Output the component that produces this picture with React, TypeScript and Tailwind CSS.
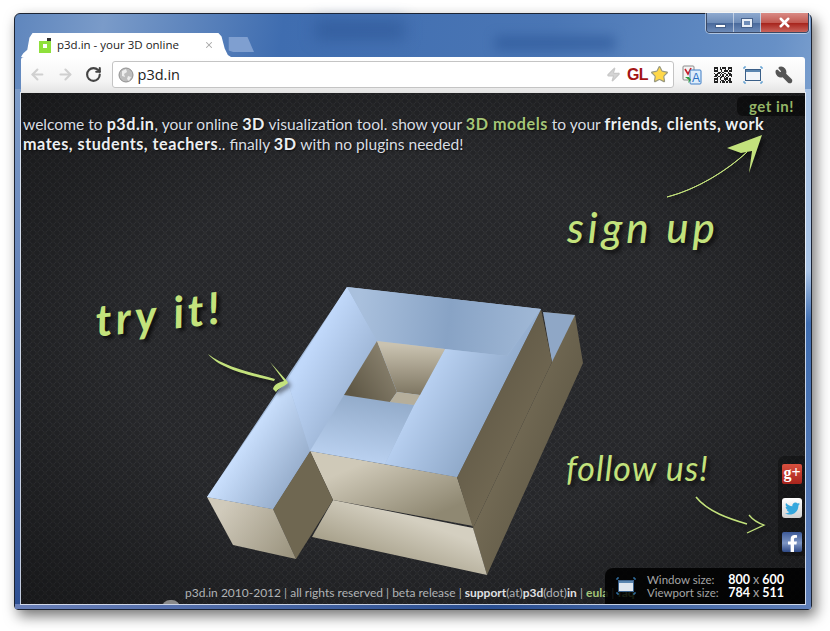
import { ArrowLeft, ArrowRight, RotateCw, Zap, Star, Wrench, X } from 'lucide-react';
import { FaTwitter, FaFacebookF } from 'react-icons/fa';

const qrRows = [
  '1110101110111',
  '1010110010101',
  '1110010111011',
  '0001101000100',
  '1011010110110',
  '0110101001011',
  '1101011010101',
  '0010110101000',
  '1110100111010',
  '1010011010110',
  '1110101101011',
];

function QrIcon() {
  return (
    <svg width="18" height="18" viewBox="0 0 13 13" shapeRendering="crispEdges">
      {qrRows.map((row, y) =>
        row.split('').map((c, x) => (c === '1' ? <rect key={`${x}-${y}`} x={x} y={y + 1} width="1" height="1" fill="#222" /> : null)),
      )}
    </svg>
  );
}

function TranslateIcon() {
  return (
    <svg width="20" height="20" viewBox="0 0 20 20">
      <rect x="1" y="1" width="11" height="14" rx="1" fill="#f4f4f4" stroke="#8a8a8a" />
      <path d="M3 4l3 5 3-6" fill="none" stroke="#c8202a" strokeWidth="1.6" />
      <rect x="8" y="5" width="11" height="14" rx="1" fill="#dcecfb" stroke="#3f7cc4" />
      <text x="10" y="17" fontSize="12" fontFamily="Liberation Sans" fill="#2a6fc4" fontWeight="400">A</text>
      <path d="M3 12l4 3-1 3 3-3-2-3z" fill="#2f9e3f" />
    </svg>
  );
}

function ScreenIcon({ dark = false }: { dark?: boolean }) {
  return (
    <svg width="20" height="18" viewBox="0 0 20 18" fill="none">
      <path d="M1 3V1h2M17 1h2v2M1 15v2h2M17 17h2v-2" stroke="#3d8ac8" strokeWidth="1" />
      <rect x="2.5" y="3.5" width="15" height="11" fill={dark ? '#dfe6ee' : '#f2f5f9'} stroke="#3a5f88" />
      <rect x="3" y="4" width="14" height="2" fill="#5b86b0" />
    </svg>
  );
}

function Model() {
  return (
    <svg className="absolute left-0 top-0 [filter:blur(0.4px)]" width="784" height="511" viewBox="21 93 784 511">
      <defs>
        <linearGradient id="blueA" gradientUnits="userSpaceOnUse" x1="240" y1="450" x2="300" y2="490">
          <stop offset="0" stopColor="#c8defc" />
          <stop offset="1" stopColor="#8fa6c4" />
        </linearGradient>
        <linearGradient id="blueB" gradientUnits="userSpaceOnUse" x1="310" y1="350" x2="390" y2="395">
          <stop offset="0" stopColor="#c0d8fa" />
          <stop offset="1" stopColor="#8ba3c2" />
        </linearGradient>
        <linearGradient id="blueC" gradientUnits="userSpaceOnUse" x1="360" y1="300" x2="540" y2="320">
          <stop offset="0" stopColor="#a9c0dd" />
          <stop offset="0.5" stopColor="#88a3c5" />
          <stop offset="1" stopColor="#a0b8d6" />
        </linearGradient>
        <linearGradient id="blueD" gradientUnits="userSpaceOnUse" x1="410" y1="390" x2="500" y2="440">
          <stop offset="0" stopColor="#bdd5f6" />
          <stop offset="1" stopColor="#86a0c0" />
        </linearGradient>
        <linearGradient id="blueE" gradientUnits="userSpaceOnUse" x1="370" y1="390" x2="360" y2="460">
          <stop offset="0" stopColor="#8ea7c6" />
          <stop offset="1" stopColor="#b9d0ef" />
        </linearGradient>
        <linearGradient id="tanA" gradientUnits="userSpaceOnUse" x1="370" y1="460" x2="400" y2="530">
          <stop offset="0" stopColor="#cfc9b8" />
          <stop offset="1" stopColor="#8f8872" />
        </linearGradient>
        <linearGradient id="tanB" gradientUnits="userSpaceOnUse" x1="400" y1="515" x2="380" y2="570">
          <stop offset="0" stopColor="#d4cfc0" />
          <stop offset="1" stopColor="#a09982" />
        </linearGradient>
        <linearGradient id="tanC" gradientUnits="userSpaceOnUse" x1="225" y1="505" x2="290" y2="555">
          <stop offset="0" stopColor="#d0cabb" />
          <stop offset="1" stopColor="#9c9580" />
        </linearGradient>
        <linearGradient id="darkA" gradientUnits="userSpaceOnUse" x1="470" y1="400" x2="540" y2="440">
          <stop offset="0" stopColor="#625a47" />
          <stop offset="1" stopColor="#736a54" />
        </linearGradient>
        <linearGradient id="darkB" gradientUnits="userSpaceOnUse" x1="490" y1="440" x2="570" y2="470">
          <stop offset="0" stopColor="#766d57" />
          <stop offset="1" stopColor="#5f5845" />
        </linearGradient>
        <linearGradient id="holeA" gradientUnits="userSpaceOnUse" x1="350" y1="390" x2="395" y2="360">
          <stop offset="0" stopColor="#5f5846" />
          <stop offset="1" stopColor="#8c8471" />
        </linearGradient>
        <linearGradient id="holeB" gradientUnits="userSpaceOnUse" x1="410" y1="345" x2="410" y2="395">
          <stop offset="0" stopColor="#c9c2b0" />
          <stop offset="1" stopColor="#7d7561" />
        </linearGradient>
      </defs>
      <polygon points="543,312 575,315 583,363 487,575 473,528 552,362" fill="url(#darkB)" />
      <polygon points="543,312 575,315 552,362" fill="#8fa7c6" />
      <polygon points="333,500 473,528 487,575 312,537" fill="url(#tanB)" />
      <polygon points="310,451 457,477 473,526 333,500" fill="url(#tanA)" />
      <polygon points="541,309 552,362 473,528 457,477" fill="url(#darkA)" />
      <polygon points="273,509 310,451 333,500 296,559" fill="#6f6751" />
      <polygon points="207,497 273,509 296,559 233,545" fill="url(#tanC)" />
      {/* underlay so the seams between the top faces stay blue */}
      <polygon points="207,497 347,287 541,309 457,477 310,451 273,509" fill="#a3bbda" />
      <polygon points="207,497 287,380 310,451 273,509" fill="url(#blueA)" />
      <polygon points="287,380 347,287 377,341 344,395 310,451" fill="url(#blueB)" />
      <polygon points="347,287 541,309 507,356 445,349 377,341" fill="url(#blueC)" />
      <polygon points="445,349 507,356 541,309 457,477 385,464 414,405" fill="url(#blueD)" />
      <polygon points="344,395 414,405 385,464 310,451" fill="url(#blueE)" />
      <polygon points="377,341 344,395 390,402 397,392" fill="url(#holeA)" />
      <polygon points="377,341 445,349 420,395 397,392" fill="url(#holeB)" />
      <polygon points="397,392 420,395 414,405 390,402" fill="#b5ae9b" />
    </svg>
  );
}

function Arrows() {
  return (
    <svg className="absolute left-0 top-0 [filter:drop-shadow(3px_3px_2px_rgba(0,0,0,0.5))]" width="784" height="511" viewBox="21 93 784 511">
      <path d="M667 197C695 190 725 172 747 152C728 170 698 189 667 197Z" fill="#c3e27c" stroke="#c3e27c" strokeWidth="1" />
      <path d="M727 148L762 135L749 173L752 151L741 153Z" fill="#c3e27c" />
      <path d="M208 354C225 367 250 372 275 379L274 381C248 375 220 369 208 354Z" fill="#c3e27c" />
      <path d="M270 362L287 381L288 383C284 387 278 388 276 392L273 389C274 384 280 382 284 381Z" fill="#c3e27c" />
      <path d="M696 497C708 512 730 519 747 524" fill="none" stroke="#c3e27c" strokeWidth="1.6" />
      <path d="M749 515C753 520 758 523 764 525L747 533" fill="none" stroke="#c3e27c" strokeWidth="1.3" />
    </svg>
  );
}

export default function App() {
  return (
    <div className="w-[830px] h-[631px] bg-white pl-[14px] pt-[13px] overflow-hidden font-['Open_Sans',sans-serif]">
      <div className="relative w-[798px] h-[597px] rounded-t-[6px] rounded-b-[4px] border border-[#1c2433] flex flex-col px-[6px] pb-[5px] bg-[linear-gradient(100deg,#5f86bd_0%,#7a9bc9_10%,#3f6db0_30%,#4a76b5_60%,#6790c6_85%,#9cb9dc_100%)] shadow-[4px_6px_14px_rgba(0,0,0,0.55)]">
        {/* blurred desktop behind the glass */}
        <div className="absolute left-[300px] top-[6px] w-[90px] h-[20px] bg-[#274f8f]/50 blur-[8px]" />
        <div className="absolute left-[480px] top-[22px] w-[120px] h-[14px] bg-[#2a5596]/60 blur-[6px]" />
        <div className="absolute left-0 bottom-0 w-[6px] h-[520px] bg-[linear-gradient(#7d9cc8,#6a88bb_30%,#2d4f92)]" />
        <div className="absolute right-0 bottom-0 w-[6px] h-[520px] bg-[linear-gradient(#a9c4e6,#a9c4e6_35%,#3f6db0_45%,#5f7fb8)]" />
        <div className="absolute left-0 right-0 bottom-0 h-[5px] bg-[linear-gradient(90deg,#6a80b8,#2a4f92_60%,#5f7fb8)]" />

        {/* window buttons */}
        <div className="absolute right-[2px] top-[-1px] h-[20px] w-[103px] flex rounded-b-[4px] border border-t-0 border-[#3b4a66] overflow-hidden shadow-[0_0_0_1px_rgba(255,255,255,0.5)]">
          <div className="w-[27px] flex items-end justify-center pb-[4px] border-r border-white/50 bg-[linear-gradient(#8ea9cf,#6f8db8_50%,#4a6a9c_55%,#6d8bb8)]">
            <div className="w-[11px] h-[4px] bg-white border border-[#47628c]" />
          </div>
          <div className="w-[27px] flex items-center justify-center border-r border-white/50 bg-[linear-gradient(#8ea9cf,#6f8db8_50%,#4a6a9c_55%,#6d8bb8)]">
            <div className="w-[12px] h-[10px] bg-[#e8eef6] border border-[#47628c] flex items-center justify-center">
              <div className="w-[6px] h-[4px] bg-[#6f8db8]" />
            </div>
          </div>
          <div className="flex-1 flex items-center justify-center bg-[linear-gradient(#d98a84,#c25a52_50%,#a8261e_55%,#c9645c)]">
            <X size={15} strokeWidth={4} className="text-white" />
          </div>
        </div>

        {/* tab strip */}
        <div className="relative h-[43px] flex items-end shrink-0">
          <div className="w-[210px] h-[24px] bg-white [clip-path:polygon(0_100%,1%_85%,3%_70%,4%_20%,5.5%_0,94%_0,95.5%_15%,97%_65%,98.5%_92%,100%_100%)] flex items-center pl-[18px] pr-[17px] gap-[5px]">
            <svg width="13" height="15" viewBox="0 0 13 15">
              <rect x="0" y="3" width="12" height="12" fill="#8fe03c" />
              <rect x="4" y="6" width="4" height="4" fill="#fff" />
              <rect x="8" y="0" width="4" height="3" fill="#333" />
            </svg>
            <span className="text-[11.5px] text-[#222] leading-none flex-1 whitespace-nowrap">p3d.in - your 3D online</span>
            <X size={10} strokeWidth={2.5} className="text-[#a8a8a8]" />
          </div>
          <div className="ml-[-3px] mb-[5px] w-[26px] h-[15px] bg-[#7f9fd0] [clip-path:polygon(3%_0,75%_0,100%_100%,20%_100%,3%_90%)]" />
        </div>

        {/* toolbar */}
        <div className="relative h-[36px] shrink-0 rounded-t-[3px] bg-[linear-gradient(#ffffff,#f4f4f4_70%,#e4e4e4)] border-b border-[#9a9a9a] flex items-center pl-[8px] pr-[12px]">
          <ArrowLeft size={17} strokeWidth={3} className="text-[#d0d0d0]" />
          <ArrowRight size={17} strokeWidth={3} className="text-[#d0d0d0] ml-[11px]" />
          <RotateCw size={17} strokeWidth={3} className="text-[#444] ml-[11px]" />
          <div className="ml-[10px] w-[567px] h-[27px] bg-white rounded-[3px] border border-[#c4c4c4] flex items-center pl-[5px] pr-[4px]">
            <svg width="16" height="16" viewBox="0 0 16 16">
              <circle cx="8" cy="8" r="7" fill="#bdbdbd" stroke="#8f8f8f" />
              <path d="M4 4l4-2 1 3-3 2 1 3-3-1zM10 9l3 1-2 4-2-2z" fill="#eeeeee" />
            </svg>
            <span className="ml-[4px] text-[14.5px] text-[#222] flex-1">p3d.in</span>
            <Zap size={15} className="text-[#c8c8c8] fill-[#d4d4d4]" />
            <span className="ml-[6px] text-[16px] font-bold text-[#a31515] font-['Liberation_Sans',sans-serif] tracking-[-0.5px]">GL</span>
            <Star size={19} strokeWidth={1.5} className="ml-[2px] text-[#9a9a80] fill-[#ffd84a]" />
          </div>
          <div className="ml-[8px]"><TranslateIcon /></div>
          <div className="ml-[12px]"><QrIcon /></div>
          <div className="ml-[11px]"><ScreenIcon /></div>
          <Wrench size={18} strokeWidth={2.5} className="ml-[12px] text-[#555] fill-[#555] -scale-x-100" />
        </div>

        {/* page */}
        <div className="relative flex-1 overflow-hidden bg-[#2d2e2f] text-[#dfe3e6] outline outline-1 outline-white/70">
          <div className="absolute inset-0 [background-image:radial-gradient(circle,#26272a_2.4px,#333438_2.9px,transparent_3.4px),radial-gradient(circle,#26272a_2.4px,#333438_2.9px,transparent_3.4px)] [background-size:8px_8px] [background-position:0_0,4px_4px]" />
          <div className="absolute inset-0 bg-[radial-gradient(ellipse_at_50%_50%,transparent_50%,rgba(0,0,0,0.4)_100%)]" />

          <p className="relative pl-[2px] pt-[21px] text-[15.6px] leading-[20px] text-[#d8dde2] font-['Lato',sans-serif] whitespace-nowrap [text-shadow:1px_1px_2px_rgba(0,0,0,0.7)]">
            welcome to <b className="text-[16.2px] tracking-[0.5px] text-[#eceff1]">p3d.in</b>, your online <b className="text-[16.2px] tracking-[0.5px] text-[#eceff1]">3D</b> visualization tool. show your{' '}
            <b className="text-[16.2px] tracking-[0.5px] text-[#a5c678]">3D models</b> to your <b className="text-[16.2px] tracking-[0.5px] text-[#eceff1]">friends, clients, work</b>
            <br />
            <b className="text-[16.2px] tracking-[0.5px] text-[#eceff1]">mates, students, teachers</b>.. finally{' '}
            <b className="text-[16.2px] tracking-[0.5px] text-[#eceff1]">3D</b> with no plugins needed!
          </p>

          <div className="absolute right-0 top-[3px] w-[68px] h-[20px] bg-black/50 rounded-l-[6px] flex items-center justify-end pr-[11px]">
            <span className="text-[15px] font-bold text-[#94b466] font-['Lato',sans-serif] tracking-[0.5px]">get in!</span>
          </div>

          <Model />
          <Arrows />

          <span className="absolute left-[546px] top-[113px] text-[42px] leading-none italic font-medium text-[#c3e27c] font-['Lato',sans-serif] tracking-[4px] [text-shadow:3px_3px_4px_rgba(0,0,0,0.7)] whitespace-nowrap">sign up</span>
          <span className="absolute left-[74px] top-[198px] text-[44px] leading-none italic font-bold text-[#c3e27c] font-['Lato',sans-serif] tracking-[4px] [text-shadow:3px_3px_4px_rgba(0,0,0,0.7)] whitespace-nowrap -rotate-6">try it!</span>
          <span className="absolute left-[545px] top-[358px] text-[34px] leading-none italic text-[#c3e27c] font-['Lato',sans-serif] tracking-[1px] [text-shadow:3px_3px_4px_rgba(0,0,0,0.7)] whitespace-nowrap">follow us!</span>

          {/* social tiles */}
          <div className="absolute right-0 top-[363px] w-[27px] h-[100px] bg-black/30 rounded-l-[6px] flex flex-col items-start pl-[4px] pt-[8px] gap-[14px]">
            <div className="w-[20px] h-[20px] rounded-[2px] bg-[linear-gradient(#d8503f,#a8241c)] flex items-center justify-center text-white text-[16px] font-bold font-['Liberation_Serif',serif] leading-none pb-[3px]">g+</div>
            <div className="w-[20px] h-[20px] rounded-[3px] bg-[linear-gradient(#ffffff,#d0d0d0)] flex items-center justify-center"><FaTwitter size={15} className="text-[#35a7dd]" /></div>
            <div className="w-[20px] h-[20px] rounded-[2px] bg-[linear-gradient(#3d5a98,#7e96c4_55%,#2f4a86)] flex items-end justify-end overflow-hidden pr-[1px]"><FaFacebookF size={17} className="text-white" /></div>
          </div>

          {/* footer */}
          <div className="absolute left-[164px] bottom-[3px] text-[12px] leading-[16px] text-[#b0b3b5] font-['Lato',sans-serif] whitespace-nowrap">
            p3d.in 2010-2012 | all rights reserved | beta release | <b className="text-[#e0e2e4]">support</b>(at)<b className="text-[#e0e2e4]">p3d</b>(dot)<b className="text-[#e0e2e4]">in</b> | <b className="text-[#a5c678]">eula</b> | <b className="text-[#a5c678]">faq</b>
          </div>
          <div className="absolute left-[141px] bottom-[-4px] w-[18px] h-[8px] rounded-t-full bg-[#8a8a8a]" />

          {/* size panel */}
          <div className="absolute right-0 bottom-0 w-[200px] h-[36px] bg-black/85 rounded-tl-[8px] flex items-center pl-[11px] pr-[21px] text-[11.5px] leading-[13px] font-['Lato',sans-serif]">
            <ScreenIcon dark />
            <div className="ml-[11px] w-[67px] text-right text-[#a5a5a5] whitespace-nowrap">
              <div>Window size:</div>
              <div>Viewport size:</div>
            </div>
            <div className="ml-auto text-right text-[12.5px] text-white font-bold whitespace-nowrap">
              <div>800 <span className="font-normal text-[#a5a5a5]">x</span> 600</div>
              <div>784 <span className="font-normal text-[#a5a5a5]">x</span> 511</div>
            </div>
          </div>
        </div>
      </div>
    </div>
  );
}
